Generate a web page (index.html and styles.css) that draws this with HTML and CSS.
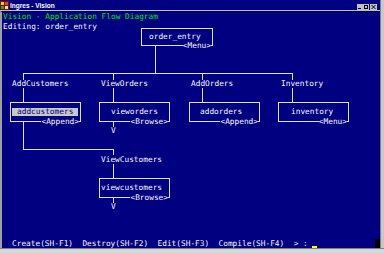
FILE: index.html
```html
<!DOCTYPE html>
<html lang="en">
<head>
  <meta charset="UTF-8" />
  <title>Ingres - Vision</title>
  <link rel="stylesheet" href="styles.css">
</head>
<body>

<div class="window">
  <div class="main">
    <div class="titlebar">
      <svg class="app-icon" width="9" height="9" viewBox="0 0 9 9">
        <rect x="0" y="0" width="9" height="9" fill="#7a1010"/>
        <rect x="1" y="1" width="3" height="3" fill="#ffcc00"/>
        <rect x="5" y="1" width="3" height="3" fill="#e04020"/>
        <rect x="1" y="5" width="3" height="3" fill="#20a040"/>
        <rect x="5" y="5" width="3" height="3" fill="#ffe080"/>
      </svg>
      <span class="title">Ingres - Vision</span>
      <div class="controls">
        <span class="ctl">
          <svg width="6" height="6" viewBox="0 0 6 6"><rect x="1" y="4" width="3" height="1" fill="#000"/></svg>
        </span>
        <span class="ctl">
          <svg width="6" height="6" viewBox="0 0 6 6"><rect x="1.5" y="1.5" width="3" height="3" fill="none" stroke="#000" stroke-width="1"/></svg>
        </span>
        <span class="ctl ctl-close">
          <svg width="7" height="6" viewBox="0 0 7 6"><path d="M1.5 1 L5.5 5 M5.5 1 L1.5 5" stroke="#000" stroke-width="1"/></svg>
        </span>
      </div>
    </div>

    <div class="screen">
      <div class="line green">Vision - Application Flow Diagram</div>
      <div class="line">Editing: order_entry</div>

      <!-- connecting lines -->
      <div class="wire w-stem"></div>
      <div class="wire w-bus"></div>
      <div class="wire w-d1"></div>
      <div class="wire w-d2"></div>
      <div class="wire w-d3"></div>
      <div class="wire w-d4"></div>
      <div class="wire w-c1"></div>
      <div class="wire w-c2"></div>
      <div class="wire w-c3"></div>
      <div class="wire w-v1"></div>
      <div class="wire w-v2"></div>

      <!-- menu item names -->
      <div class="lbl l-addcust">AddCustomers</div>
      <div class="lbl l-vieword">ViewOrders</div>
      <div class="lbl l-addord">AddOrders</div>
      <div class="lbl l-inv">Inventory</div>
      <div class="lbl l-viewcust">ViewCustomers</div>

      <!-- frames -->
      <div class="node n-order">order_entry<span class="kind">&lt;Menu&gt;</span></div>
      <div class="node n-addcust"><span class="sel">addcustomers</span><span class="kind">&lt;Append&gt;</span></div>
      <div class="node n-vieword">vieworders<span class="kind">&lt;Browse&gt;</span></div>
      <div class="node n-addord">addorders<span class="kind">&lt;Append&gt;</span></div>
      <div class="node n-inv">inventory<span class="kind">&lt;Menu&gt;</span></div>
      <div class="node n-viewcust">viewcustomers<span class="kind">&lt;Browse&gt;</span></div>

      <div class="mark m-1">V</div>
      <div class="mark m-2">V</div>

      <div class="menu">
        <span>Create(SH-F1)  Destroy(SH-F2)  Edit(SH-F3)  Compile(SH-F4)  &gt; : </span>
        <span class="cursor"></span>
        <span class="corner-block"></span>
      </div>
    </div>
  </div>
  <div class="frame-right"></div>
</div>
<div class="frame-bottom"></div>

</body>
</html>
```

FILE: styles.css
```css
body {
  margin: 0;
  background: #c0c0c0;
  width: 384px;
  height: 253px;
  overflow: hidden;
}

.window {
  display: flex;
  height: 248px;
}

.main {
  width: 380px;
  display: flex;
  flex-direction: column;
}

.frame-right {
  flex: 1;
  background: #c8c8c8;
  border-left: 1px solid #808080;
}

.frame-bottom {
  height: 5px;
  box-sizing: border-box;
  border-top: 1px solid #808080;
  background: #d8d8d8;
}

/* title bar */
.titlebar {
  height: 10px;
  background: #000080;
  border-bottom: 1px solid #c0c0c0;
  display: flex;
  align-items: flex-end;
}

.app-icon {
  display: block;
}

.title {
  font-family: "Liberation Sans", Arial, sans-serif;
  font-weight: bold;
  font-size: 6.5px;
  line-height: 7px;
  color: #ffffff;
  margin-left: 1px;
  margin-bottom: 1px;
}

.controls {
  margin-left: auto;
  margin-right: 3px;
  display: flex;
}

.ctl {
  width: 6px;
  height: 6px;
  background: #c0c0c0;
  display: flex;
}

.ctl-close {
  width: 7px;
  margin-left: 1px;
}

/* terminal area */
.screen {
  position: relative;
  flex: 1;
  box-sizing: border-box;
  border-top: 1px solid #000050;
  border-left: 2px solid #a0a0a0;
  background: #000080;
  color: #f8f8f8;
  font-family: "DejaVu Sans Mono", monospace;
  font-size: 7.8px;
  display: flex;
  flex-direction: column;
}

.line {
  line-height: 10px;
  padding-left: 1px;
  white-space: pre;
}

.green {
  color: #00e600;
}

.menu {
  margin-top: auto;
  height: 9px;
  line-height: 9px;
  padding-left: 10px;
  display: flex;
  align-items: flex-end;
  white-space: pre;
}

.cursor {
  width: 5px;
  height: 2px;
  background: #ffff00;
}

.corner-block {
  margin-left: auto;
  width: 5px;
  height: 9px;
  background: #000000;
}

/* diagram */
.wire {
  position: absolute;
  width: 1px;
  background: #e0e0f0;
}

.w-stem { left: 153px; top: 34px; height: 27px; }
.w-bus  { left: 21px;  top: 61px; width: 270px; height: 1px; }
.w-d1   { left: 21px;  top: 61px; height: 29px; }
.w-d2   { left: 111px; top: 61px; height: 29px; }
.w-d3   { left: 200px; top: 61px; height: 29px; }
.w-d4   { left: 290px; top: 61px; height: 29px; }
.w-c1   { left: 21px;  top: 110px; height: 28px; }
.w-c2   { left: 21px;  top: 137px; width: 91px; height: 1px; }
.w-c3   { left: 111px; top: 137px; height: 29px; }
.w-v1   { left: 111px; top: 110px; height: 5px; }
.w-v2   { left: 111px; top: 186px; height: 5px; }

.lbl {
  position: absolute;
  top: 68px;
  line-height: 8px;
  background: #000080;
  white-space: pre;
}

.l-addcust  { left: 10px; }
.l-vieword  { left: 99px; }
.l-addord   { left: 189px; }
.l-inv      { left: 279px; }
.l-viewcust { left: 99px; top: 143px; line-height: 9px; }

.node {
  position: absolute;
  top: 90px;
  width: 71px;
  height: 20px;
  box-sizing: border-box;
  border: 1px solid #e0e0f0;
  padding-top: 4px;
  line-height: 10px;
  white-space: pre;
}

.n-order    { left: 139px; top: 16px; width: 72px; height: 18px; padding-top: 3px; padding-left: 7px; }
.n-addcust  { left: 8px; padding-left: 1px; }
.n-vieword  { left: 97px; padding-left: 11px; }
.n-addord   { left: 187px; padding-left: 10px; }
.n-inv      { left: 276px; padding-left: 12px; }
.n-viewcust { left: 97px; top: 166px; padding-left: 1px; }

.kind {
  position: absolute;
  right: 1px;
  bottom: -5px;
  line-height: 9px;
  background: #000080;
}

.sel {
  display: inline-block;
  margin-top: 1px;
  padding: 0 5px;
  line-height: 8px;
  background: #c8c8c8;
  color: #000080;
}

.mark {
  position: absolute;
  left: 109px;
  line-height: 8px;
}

.m-1 { top: 115px; }
.m-2 { top: 191px; }
```
